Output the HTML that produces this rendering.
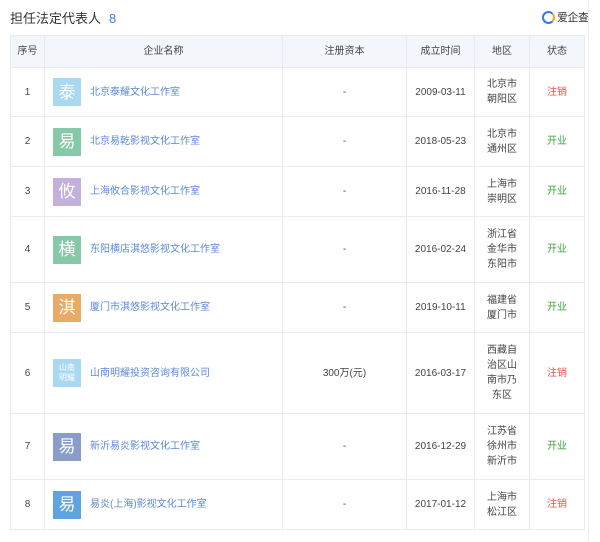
<!DOCTYPE html><html><head><meta charset="utf-8"><style>
body{margin:0;width:600px;height:542px;background:#fff;font-family:"Liberation Sans","Noto Sans CJK SC",sans-serif;overflow:hidden;position:relative}
.title{position:absolute;left:10px;top:8px;font-size:13px;color:#333}
.title b{font-weight:normal;color:#3f7fe0;margin-left:8px}
.brand{position:absolute;left:542px;top:9px;font-size:11px;color:#333;display:flex;align-items:center;letter-spacing:-0.5px}
.brand i{display:inline-block;width:9px;height:9px;border:2px solid #2f7de1;border-radius:50%;margin-right:2px;background:#fff;position:relative;border-right-color:#f5a623}
table{position:absolute;left:10px;top:35px;border-collapse:collapse;width:574px;font-size:10px;color:#444;table-layout:fixed}
td,th{border:1px solid #e8ecf2;text-align:center;padding:0;line-height:15px}
th{background:#f3f6fb;font-weight:normal;height:31px;color:#444}
.n{text-align:left}
.n div{display:flex;align-items:center}
.l{width:28px;height:28px;margin:0 9px 0 8px;color:#fff;font-size:17px;display:flex;align-items:center;justify-content:center;flex:none}
.s{font-size:8px;line-height:10px;text-align:center}
a{color:#5b8ad8}
.r{color:#e5534b}.g{color:#3fa33f}
.ph{position:absolute;left:588px;top:0;width:1px;height:542px;background:#eee}
</style></head><body>
<div class="title">担任法定代表人<b>8</b></div>
<div class="brand"><i></i>爱企查</div>
<div class="ph"></div>
<table>
<colgroup><col style="width:34px"><col style="width:238px"><col style="width:124px"><col style="width:68px"><col style="width:55px"><col style="width:55px"></colgroup>
<tr><th>序号</th><th>企业名称</th><th>注册资本</th><th>成立时间</th><th>地区</th><th>状态</th></tr>
<tr style="height:49px"><td>1</td><td class="n"><div><span class="l" style="background:#a9d9f1">泰</span><a>北京泰耀文化工作室</a></div></td><td>-</td><td>2009-03-11</td><td>北京市<br>朝阳区</td><td class="r">注销</td></tr>
<tr style="height:50px"><td>2</td><td class="n"><div><span class="l" style="background:#86c9a8">易</span><a>北京易乾影视文化工作室</a></div></td><td>-</td><td>2018-05-23</td><td>北京市<br>通州区</td><td class="g">开业</td></tr>
<tr style="height:50px"><td>3</td><td class="n"><div><span class="l" style="background:#c3b0dd">攸</span><a>上海攸合影视文化工作室</a></div></td><td>-</td><td>2016-11-28</td><td>上海市<br>崇明区</td><td class="g">开业</td></tr>
<tr style="height:66px"><td>4</td><td class="n"><div><span class="l" style="background:#86c9a8">横</span><a>东阳横店淇悠影视文化工作室</a></div></td><td>-</td><td>2016-02-24</td><td>浙江省<br>金华市<br>东阳市</td><td class="g">开业</td></tr>
<tr style="height:50px"><td>5</td><td class="n"><div><span class="l" style="background:#e9aa67">淇</span><a>厦门市淇悠影视文化工作室</a></div></td><td>-</td><td>2019-10-11</td><td>福建省<br>厦门市</td><td class="g">开业</td></tr>
<tr style="height:81px"><td>6</td><td class="n"><div><span class="l s" style="background:#a9d9f1">山南<br>明耀</span><a>山南明耀投资咨询有限公司</a></div></td><td>300万(元)</td><td>2016-03-17</td><td>西藏自<br>治区山<br>南市乃<br>东区</td><td class="r">注销</td></tr>
<tr style="height:66px"><td>7</td><td class="n"><div><span class="l" style="background:#8a9dc9">易</span><a>新沂易炎影视文化工作室</a></div></td><td>-</td><td>2016-12-29</td><td>江苏省<br>徐州市<br>新沂市</td><td class="g">开业</td></tr>
<tr style="height:50px"><td>8</td><td class="n"><div><span class="l" style="background:#5fa3e3">易</span><a>易炎(上海)影视文化工作室</a></div></td><td>-</td><td>2017-01-12</td><td>上海市<br>松江区</td><td class="r">注销</td></tr>
</table>
</body></html>
